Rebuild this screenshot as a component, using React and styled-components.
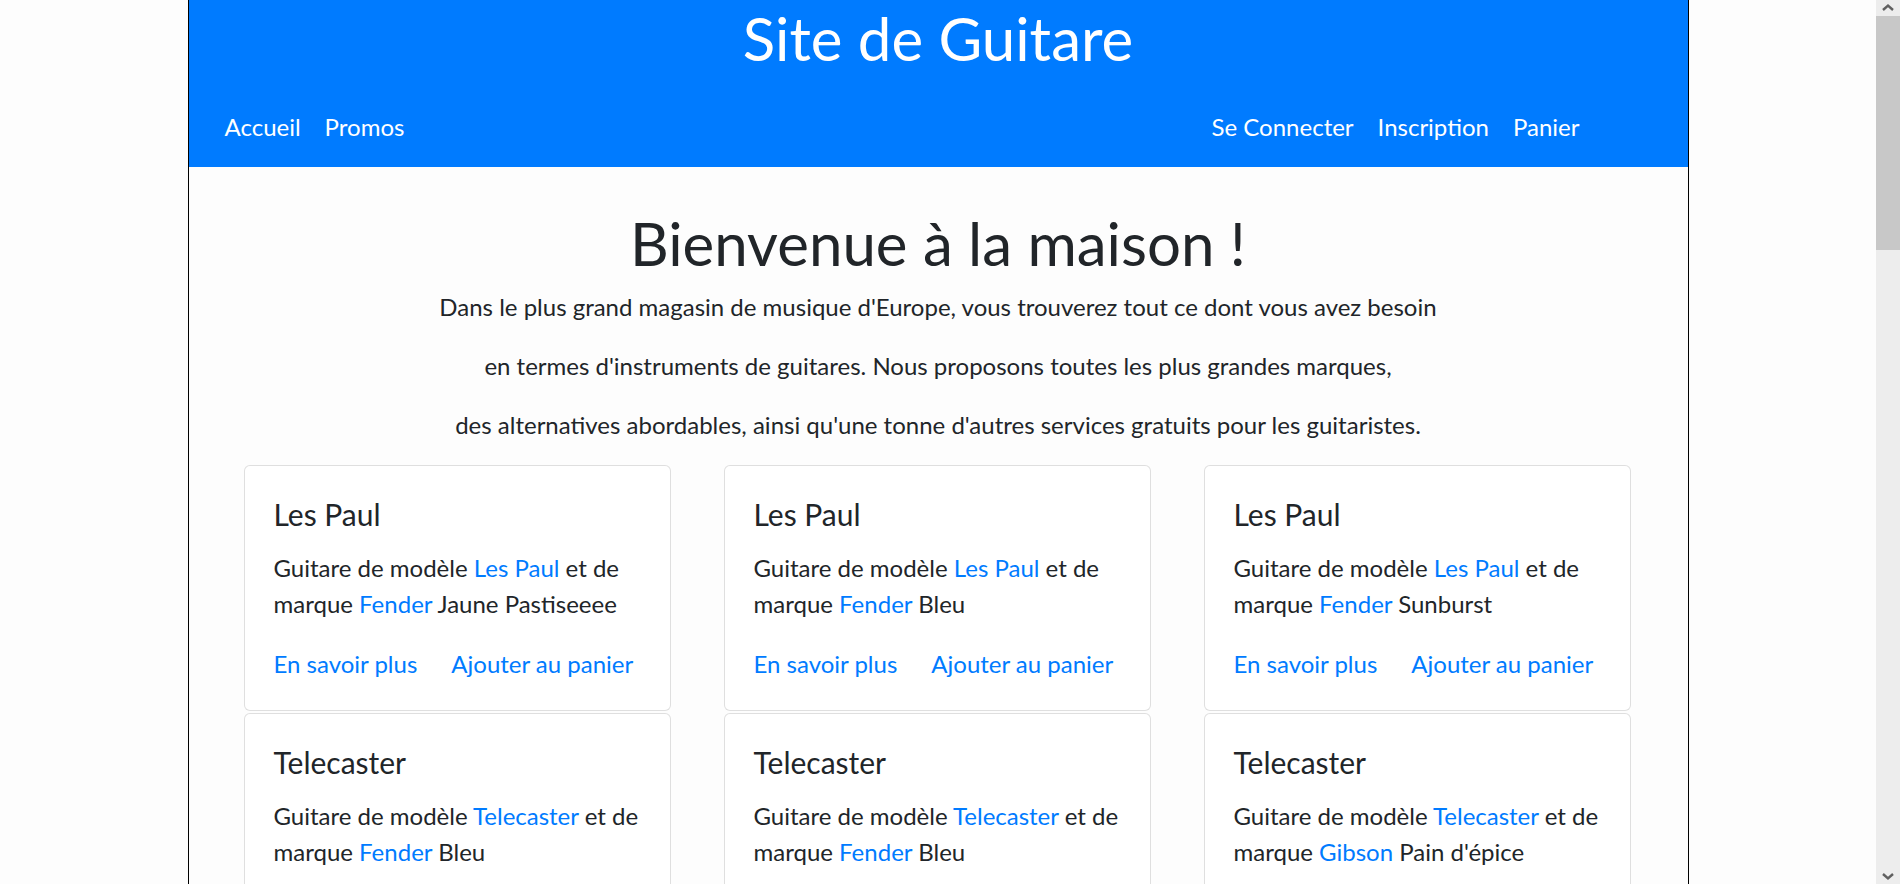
import React from "react";
import styled, { createGlobalStyle } from "styled-components";

const GlobalStyle = createGlobalStyle`
  html, body {
    margin: 0;
    padding: 0;
    overflow: hidden;
  }
  body {
    background: #fdfdfd;
    color: #212529;
    font-family: "Segoe UI", Lato, "Noto Sans", sans-serif;
  }
  * { box-sizing: border-box; }
`;

const guitars = [
  { name: "Les Paul", brand: "Fender", color: "Jaune Pastiseeee" },
  { name: "Les Paul", brand: "Fender", color: "Bleu" },
  { name: "Les Paul", brand: "Fender", color: "Sunburst" },
  { name: "Telecaster", brand: "Fender", color: "Bleu" },
  { name: "Telecaster", brand: "Fender", color: "Bleu" },
  { name: "Telecaster", brand: "Gibson", color: "Pain d'épice" },
];

function App() {
  return (
    <>
      <GlobalStyle />
      <Viewport>
        <Scroller>
          <Page>
            <Header>
              <SiteTitle>Site de Guitare</SiteTitle>
              <NavBar>
                <NavGroup>
                  <NavLink href="#">Accueil</NavLink>
                  <NavLink href="#">Promos</NavLink>
                </NavGroup>
                <NavGroup>
                  <NavLink href="#">Se Connecter</NavLink>
                  <NavLink href="#">Inscription</NavLink>
                  <NavLink href="#">Panier</NavLink>
                </NavGroup>
              </NavBar>
            </Header>
            <Main>
              <Welcome>Bienvenue à la maison !</Welcome>
              <Intro>Dans le plus grand magasin de musique d'Europe, vous trouverez tout ce dont vous avez besoin</Intro>
              <Intro>en termes d'instruments de guitares. Nous proposons toutes les plus grandes marques,</Intro>
              <Intro>des alternatives abordables, ainsi qu'une tonne d'autres services gratuits pour les guitaristes.</Intro>
              <CardGrid>
                {guitars.map((g, i) => (
                  <Card key={i}>
                    <CardTitle>{g.name}</CardTitle>
                    <CardText>
                      Guitare de modèle <Link href="#">{g.name}</Link> et de marque{" "}
                      <Link href="#">{g.brand}</Link> {g.color}
                    </CardText>
                    <CardLinks>
                      <Link href="#">En savoir plus</Link>
                      <Link href="#">Ajouter au panier</Link>
                    </CardLinks>
                  </Card>
                ))}
              </CardGrid>
            </Main>
          </Page>
        </Scroller>
        <ScrollBar>
          <Arrow viewBox="0 0 24 16">
            <path d="M7 10 L12 5.5 L17 10" />
          </Arrow>
          <Thumb />
          <Track />
          <Arrow viewBox="0 0 24 16">
            <path d="M7 6 L12 10.5 L17 6" />
          </Arrow>
        </ScrollBar>
      </Viewport>
    </>
  );
}

const Viewport = styled.div`
  display: flex;
  height: 100vh;
`;

const Scroller = styled.div`
  flex: 1;
  overflow: hidden;
`;

const ScrollBar = styled.div`
  width: 24px;
  background: #ededed;
  display: flex;
  flex-direction: column;
`;

const Arrow = styled.svg`
  width: 24px;
  height: 16px;
  flex: none;
  path {
    fill: none;
    stroke: #606060;
    stroke-width: 2.4;
  }
`;

const Thumb = styled.div`
  height: 234px;
  background: #c8c8c8;
  flex: none;
`;

const Track = styled.div`
  flex: 1;
`;

const Page = styled.div`
  width: 1501px;
  margin: 0 auto;
  border-left: 1px solid #000;
  border-right: 1px solid #000;
  min-height: 100vh;
`;

const Header = styled.header`
  background: #007bff;
  height: 167px;
  color: #fff;
  display: flex;
  flex-direction: column;
`;

const SiteTitle = styled.h1`
  margin: 0;
  padding-top: 2px;
  text-align: center;
  font-weight: 400;
  font-size: 60px;
  line-height: 72px;
`;

const NavBar = styled.nav`
  display: flex;
  justify-content: space-between;
  margin-top: 35px;
  padding: 0 96px 0 24px;
`;

const NavGroup = styled.div`
  display: flex;
`;

const NavLink = styled.a`
  color: #fff;
  text-decoration: none;
  font-size: 24px;
  line-height: 36px;
  padding: 0 12px;
`;

const Main = styled.main`
  padding: 0 55px;
`;

const Welcome = styled.h1`
  margin: 0 0 10px;
  padding-top: 40px;
  text-align: center;
  font-weight: 400;
  font-size: 60px;
  line-height: 72px;
`;

const Intro = styled.p`
  margin: 0 0 23px;
  text-align: center;
  font-size: 24px;
  line-height: 36px;
`;

const CardGrid = styled.div`
  display: grid;
  grid-template-columns: repeat(3, 427px);
  column-gap: 53px;
  row-gap: 2px;
  margin-top: -1px;
`;

const Card = styled.div`
  background: #fff;
  border: 1px solid rgba(0, 0, 0, 0.125);
  border-radius: 6px;
  padding: 30px 30px 28px 29px;
`;

const CardTitle = styled.h5`
  margin: 0 0 18px;
  font-weight: 400;
  font-size: 30px;
  line-height: 36px;
`;

const CardText = styled.p`
  margin: 0 0 24px;
  font-size: 24px;
  line-height: 36px;
`;

const CardLinks = styled.div`
  display: flex;
  gap: 34px;
  font-size: 24px;
  line-height: 36px;
`;

const Link = styled.a`
  color: #007bff;
  text-decoration: none;
`;

export default App;
